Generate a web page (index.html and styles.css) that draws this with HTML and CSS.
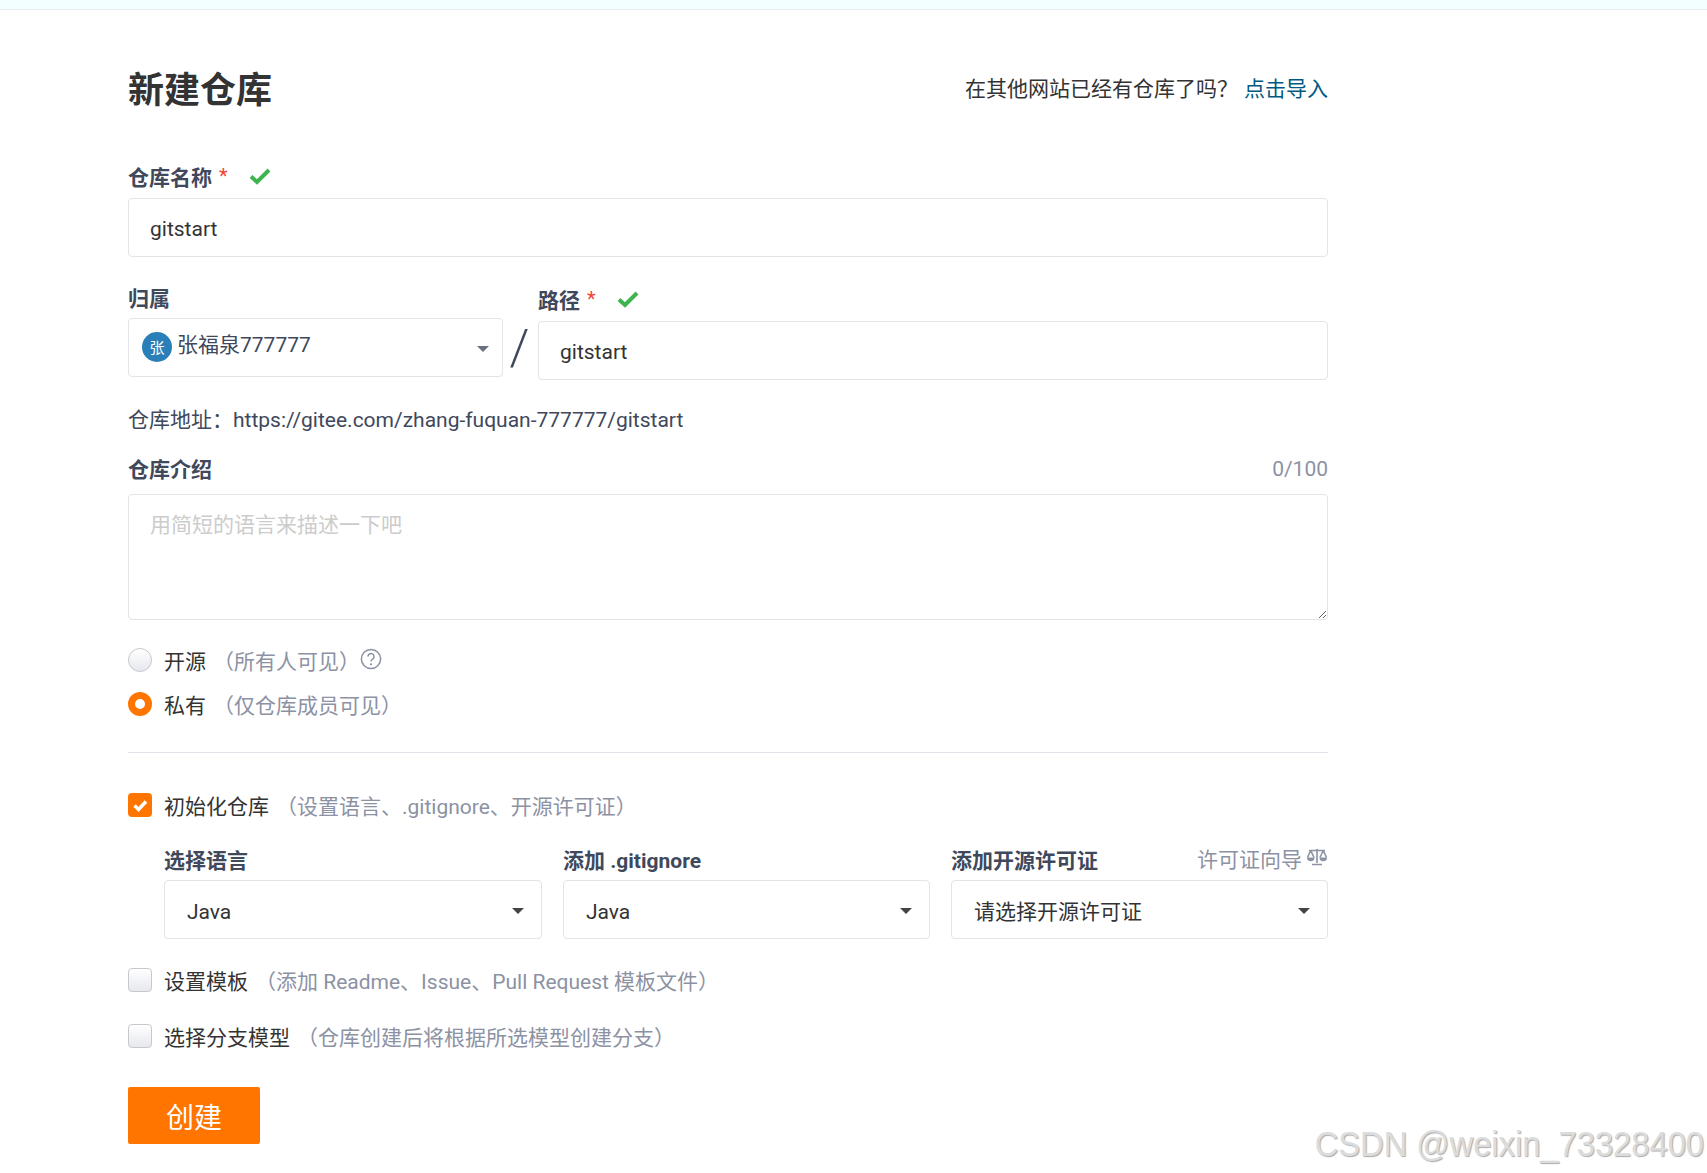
FILE: index.html
```html
<!DOCTYPE html>
<html lang="zh-CN">
<head>
<meta charset="utf-8">
<title>新建仓库</title>
<link rel="stylesheet" href="styles.css">
</head>
<body>
<div class="topbar"></div>
<main class="page">
  <header class="head">
    <h1 class="title">新建仓库</h1>
    <p class="import"><span>在其他网站已经有仓库了吗？</span><a class="link" href="#">点击导入</a></p>
  </header>

  <div class="label-row label-first">
    <label class="label">仓库名称</label><span class="star">*</span>
    <svg class="ok" viewBox="0 0 22 18"><path d="M2 9.5 L8 15 L20 3" /></svg>
  </div>
  <input class="input" value="gitstart">

  <div class="owner-row">
    <div class="owner-col">
      <div class="label-row tight"><label class="label">归属</label></div>
      <div class="select owner-select">
        <span class="avatar">张</span><span class="owner-name">张福泉777777</span>
        <i class="caret caret-muted"></i>
      </div>
    </div>
    <div class="slash">/</div>
    <div class="path-col">
      <div class="label-row"><label class="label">路径</label><span class="star">*</span>
        <svg class="ok" viewBox="0 0 22 18"><path d="M2 9.5 L8 15 L20 3" /></svg>
      </div>
      <input class="input" value="gitstart">
    </div>
  </div>

  <p class="address">仓库地址：https://gitee.com/zhang-fuquan-777777/gitstart</p>

  <div class="label-row split intro-label">
    <label class="label">仓库介绍</label><span class="hint">0/100</span>
  </div>
  <textarea class="textarea" placeholder="用简短的语言来描述一下吧"></textarea>

  <div class="option first-radio">
    <span class="radio"></span><span class="opt-text">开源</span><span class="hint opt-hint">（所有人可见）</span>
    <svg class="help" viewBox="0 0 22 22"><circle cx="11" cy="11" r="9.6"/><path d="M8 8.6a3 3 0 1 1 4.6 2.5c-1 .7-1.6 1.200-1.600 2.400"/><circle class="dot" cx="11" cy="16.300" r="1.100"/></svg>
  </div>
  <div class="option second-radio">
    <span class="radio radio-on"></span><span class="opt-text">私有</span><span class="hint opt-hint">（仅仓库成员可见）</span>
  </div>

  <hr class="rule">

  <div class="option init-row">
    <span class="check check-on"><svg viewBox="0 0 24 24"><path d="M6.500 12.500 L10.500 16.500 L18 8.500"/></svg></span><span class="opt-text">初始化仓库</span><span class="hint opt-hint">（设置语言、.gitignore、开源许可证）</span>
  </div>

  <div class="init-grid">
    <div class="init-col col-lang">
      <div class="label-row tight"><label class="label">选择语言</label></div>
      <div class="select"><span class="value">Java</span><i class="caret"></i></div>
    </div>
    <div class="init-col col-ignore">
      <div class="label-row tight"><label class="label">添加 .gitignore</label></div>
      <div class="select"><span class="value">Java</span><i class="caret"></i></div>
    </div>
    <div class="init-col col-license">
      <div class="label-row tight split"><label class="label">添加开源许可证</label>
        <span class="hint guide">许可证向导
          <svg class="scale" viewBox="0 0 22 20"><path class="line" d="M11 2V16M6 17.500h10M3 3.500h16"/><path class="pan" d="M1 10.500h7.500a3.750 3.750 0 0 1-7.500 0zM13.500 10.500h7.500a3.750 3.750 0 0 1-7.500 0z"/><path class="line" d="M4.750 3.500 1.500 10.500M4.750 3.500 8 10.500M17.250 3.500 14 10.500M17.250 3.500 20.500 10.500"/></svg>
        </span>
      </div>
      <div class="select"><span class="value value-license">请选择开源许可证</span><i class="caret"></i></div>
    </div>
  </div>

  <div class="option template-row">
    <span class="check"></span><span class="opt-text">设置模板</span><span class="hint opt-hint">（添加 Readme、Issue、Pull Request 模板文件）</span>
  </div>
  <div class="option branch-row">
    <span class="check"></span><span class="opt-text">选择分支模型</span><span class="hint opt-hint">（仓库创建后将根据所选模型创建分支）</span>
  </div>

  <button class="submit" type="button">创建</button>
</main>
<div class="watermark">CSDN @weixin_73328400</div>
</body>
</html>
```
FILE: styles.css
```css
* { box-sizing: border-box; }
html, body { margin: 0; padding: 0; }
body {
  position: relative;
  height: 1173px;
  overflow: hidden;
  background: #fff;
  color: #333;
  font-family: Roboto, "Noto Sans CJK SC", sans-serif;
  font-size: 21px;
}
.topbar { height: 10px; background: #f3feff; border-bottom: 1px solid #e6eced; }
.page { width: 1200px; margin-left: 128px; }

.head { display: flex; justify-content: space-between; align-items: center; height: 50px; margin-top: 54px; }
.title { margin: 0; padding-top: 4px; font-size: 36px; font-weight: 700; line-height: 50px; color: #333; }
.import { margin: 0; display: flex; gap: 6px; line-height: 30px; color: #333; }
.link { color: #005980; text-decoration: none; }

.label-row { display: flex; align-items: center; height: 28px; margin-bottom: 7px; }
.label-first { margin-top: 49px; }
.tight { margin-bottom: 6px; }
.split { justify-content: space-between; }
.label { padding-top: 2px; font-weight: 700; color: #40485b; line-height: 28px; }
.star { color: #f44336; margin-left: 7px; margin-top: -2px; font-size: 20px; line-height: 20px; }
.ok { width: 22px; height: 18px; margin-left: 21px; margin-top: -3px; }
.ok path { fill: none; stroke: #3fb34f; stroke-width: 4; }

.input {
  display: block;
  width: 100%;
  height: 59px;
  padding: 3px 21px 0;
  border: 1px solid #e3e3ea;
  border-radius: 4px;
  outline: none;
  background: #fff;
  color: #333;
  font: inherit;
}
.owner-row { display: flex; margin-top: 27px; }
.owner-col { width: 375px; }
.slash { width: 33px; padding-top: 34px; text-align: center; font-size: 50px; line-height: 60px; color: #40485b; font-weight: 300; }
.path-col { flex: 1; margin-left: 2px; padding-top: 2px; }

.select {
  position: relative;
  display: flex;
  align-items: center;
  height: 59px;
  padding: 0 22px;
  border: 1px solid #e3e3ea;
  border-radius: 4px;
  background: #fff;
  color: #333;
}
.owner-select { padding-left: 13px; }
.avatar {
  display: flex;
  align-items: center;
  justify-content: center;
  width: 30px;
  height: 30px;
  margin-top: -2px;
  border-radius: 50%;
  background: #2a7fb8;
  color: #fff;
  font-size: 15px;
}
.owner-name { margin-left: 5px; margin-top: -10px; color: #40485b; }
.caret {
  position: absolute;
  right: 17px;
  top: 27px;
  width: 0;
  height: 0;
  border-left: 6px solid transparent;
  border-right: 6px solid transparent;
  border-top: 6px solid #444;
}
.caret-muted { right: 13px; top: 27px; border-top-color: #6b7080; }
.value { margin-left: 0; margin-top: 5px; }
.value-license { margin-top: 0; }

.address { margin: 25px 0 0; line-height: 30px; color: #40485b; }
.intro-label { margin: 20px 0 11px; }
.hint { color: #8c92a4; }
.textarea {
  display: block;
  width: 100%;
  height: 126px;
  padding: 15px 21px;
  border: 1px solid #e3e3ea;
  border-radius: 4px;
  outline: none;
  font: inherit;
  line-height: 30px;
  color: #333;
}
.textarea::placeholder { color: #ccc; opacity: 1; }

.option { display: flex; align-items: center; height: 30px; }
.first-radio { margin-top: 25px; }
.second-radio { margin-top: 14px; }
.init-row { margin-top: 37px; }
.template-row { margin-top: 26px; }
.branch-row { margin-top: 26px; }
.opt-text { margin-left: 12px; color: #333; }
.opt-hint { margin-left: 7px; }
.radio {
  width: 24px;
  height: 24px;
  margin-top: -1px;
  border: 1px solid #c8c8cc;
  border-radius: 50%;
  background: linear-gradient(#fff, #e6e8ee);
}
.radio-on { border: 7.500px solid #ff7500; background: #fff; }
.help { width: 22px; height: 22px; margin-left: 0; margin-top: -3px; }
.help circle, .help path { fill: none; stroke: #8c92a4; stroke-width: 1.500; }
.help .dot { fill: #8c92a4; stroke: none; }
.check {
  width: 24px;
  height: 24px;
  margin-top: -1px;
  border: 1px solid #c8c8cc;
  border-radius: 4px;
  background: linear-gradient(#fff, #e6e8ee);
}
.check-on { border: 0; background: #ff7500; }
.check svg { display: block; width: 24px; height: 24px; }
.check path { fill: none; stroke: #fff; stroke-width: 3.500; }
.rule { height: 1px; margin: 33px 0 0; border: 0; background: #e0e4ea; }

.init-grid { display: flex; margin-top: 26px; margin-left: 36px; }
.col-lang { width: 378px; margin-right: 21px; }
.col-ignore { width: 367px; margin-right: 21px; }
.col-license { flex: 1; }
.guide { display: flex; align-items: center; gap: 4px; margin-top: -4px; }
.scale { width: 22px; height: 20px; margin-top: -2px; }
.scale .line { fill: none; stroke: #8c92a4; stroke-width: 1.600; }
.scale .pan { fill: #8c92a4; stroke: none; }

.submit {
  display: block;
  width: 132px;
  height: 57px;
  margin-top: 36px;
  border: 0;
  border-radius: 2px;
  background: #ff7500;
  color: #fff;
  font: inherit;
  font-size: 28px;
}
.watermark {
  position: absolute;
  right: 3px;
  top: 1123px;
  font-family: "Liberation Sans", sans-serif;
  font-size: 32.700px;
  line-height: 42px;
  color: #dcdcdc;
  text-shadow: 1px 1px 1px #aaa;
  white-space: nowrap;
  transform: scaleY(1.1);
}
```
